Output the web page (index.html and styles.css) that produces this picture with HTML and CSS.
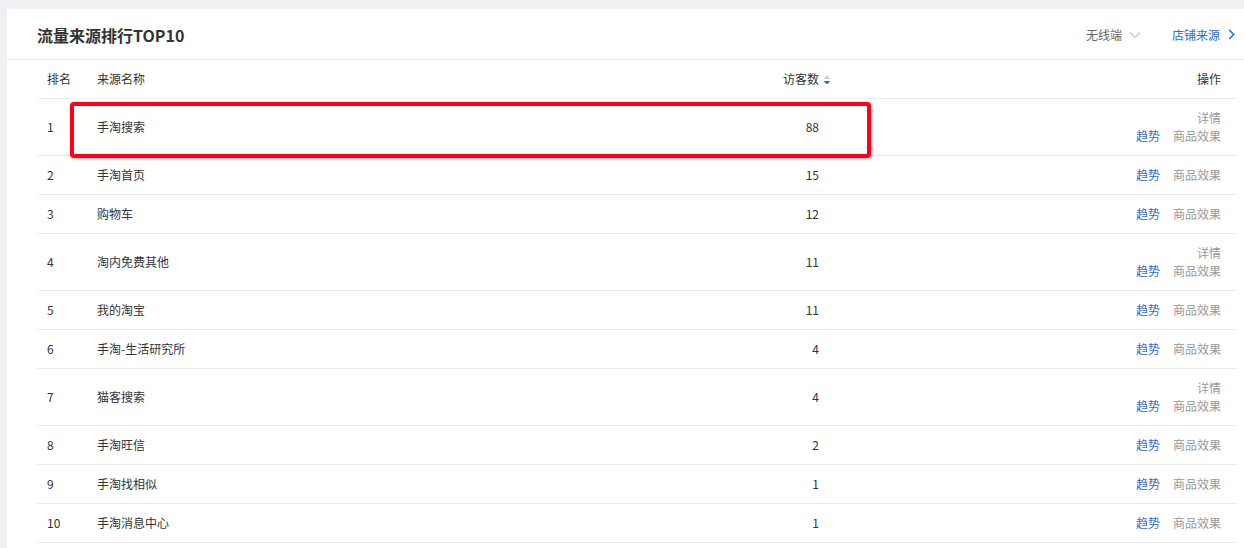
FILE: index.html
```html
<!DOCTYPE html>
<html lang="zh-CN">
<head>
<meta charset="utf-8">
<title>流量来源排行TOP10</title>
<link rel="stylesheet" href="styles.css">
</head>
<body>
<div class="page">
  <div class="card">
    <div class="card-head">
      <h2 class="title">流量来源排行TOP10</h2>
      <div class="head-tools">
        <span class="select">无线端
          <svg class="chev-down" width="12" height="8" viewBox="0 0 12 8"><path d="M1 1.5 L6 6.5 L11 1.5" fill="none" stroke="#c8c8c8" stroke-width="1.2"/></svg>
        </span>
        <a class="more">店铺来源
          <svg class="chev-right" width="7" height="11" viewBox="0 0 7 11"><path d="M1.2 1 L5.7 5.5 L1.2 10" fill="none" stroke="#2f6bd8" stroke-width="1.6"/></svg>
        </a>
      </div>
    </div>
    <div class="table-wrap">
      <table class="rank">
        <thead>
          <tr>
            <th class="c-rank">排名</th>
            <th class="c-name">来源名称</th>
            <th class="c-num">访客数<span class="sort"><svg width="8" height="10" viewBox="0 0 8 10"><path d="M4 0.5 L7.5 4 L0.5 4 Z" fill="#c4cbd6"/><path d="M0.5 6 L7.5 6 L4 9.5 Z" fill="#2f6bd8"/></svg></span></th>
            <th class="c-op">操作</th>
          </tr>
        </thead>
        <tbody>
          <tr><td class="c-rank">1</td><td class="c-name">手淘搜索</td><td class="c-num">88</td><td class="c-op"><div class="detail">详情</div><span class="trend">趋势</span><span class="effect">商品效果</span></td></tr>
          <tr><td class="c-rank">2</td><td class="c-name">手淘首页</td><td class="c-num">15</td><td class="c-op"><span class="trend">趋势</span><span class="effect">商品效果</span></td></tr>
          <tr><td class="c-rank">3</td><td class="c-name">购物车</td><td class="c-num">12</td><td class="c-op"><span class="trend">趋势</span><span class="effect">商品效果</span></td></tr>
          <tr><td class="c-rank">4</td><td class="c-name">淘内免费其他</td><td class="c-num">11</td><td class="c-op"><div class="detail">详情</div><span class="trend">趋势</span><span class="effect">商品效果</span></td></tr>
          <tr><td class="c-rank">5</td><td class="c-name">我的淘宝</td><td class="c-num">11</td><td class="c-op"><span class="trend">趋势</span><span class="effect">商品效果</span></td></tr>
          <tr><td class="c-rank">6</td><td class="c-name">手淘-生活研究所</td><td class="c-num">4</td><td class="c-op"><span class="trend">趋势</span><span class="effect">商品效果</span></td></tr>
          <tr><td class="c-rank">7</td><td class="c-name">猫客搜索</td><td class="c-num">4</td><td class="c-op"><div class="detail">详情</div><span class="trend">趋势</span><span class="effect">商品效果</span></td></tr>
          <tr><td class="c-rank">8</td><td class="c-name">手淘旺信</td><td class="c-num">2</td><td class="c-op"><span class="trend">趋势</span><span class="effect">商品效果</span></td></tr>
          <tr><td class="c-rank">9</td><td class="c-name">手淘找相似</td><td class="c-num">1</td><td class="c-op"><span class="trend">趋势</span><span class="effect">商品效果</span></td></tr>
          <tr><td class="c-rank">10</td><td class="c-name">手淘消息中心</td><td class="c-num">1</td><td class="c-op"><span class="trend">趋势</span><span class="effect">商品效果</span></td></tr>
        </tbody>
      </table>
      <div class="highlight"></div>
    </div>
  </div>
</div>
</body>
</html>
```

FILE: styles.css
```css
html, body {
  margin: 0;
  padding: 0;
  overflow: hidden;
}
body {
  background: #eef0f4;
  font-family: "Noto Sans CJK SC", "Liberation Sans", sans-serif;
  color: #333;
  font-size: 12px;
}
.page {
  padding: 9px 0 0 7px;
}
.card {
  background: #fff;
  height: 560px;
}
.card-head {
  height: 50px;
  border-bottom: 1px solid #e8e8e8;
  display: flex;
  align-items: center;
  justify-content: space-between;
  padding: 0 9px 0 30px;
}
.title {
  margin: 0;
  font-size: 16px;
  font-weight: bold;
  color: #333;
  line-height: 20px;
  padding-top: 1px;
}
.head-tools {
  display: flex;
  align-items: center;
  padding-top: 1px;
}
.select {
  color: #666;
  display: flex;
  align-items: center;
  gap: 7px;
  margin-right: 31px;
}
.more {
  color: #2f6bd8;
  display: flex;
  align-items: center;
  gap: 8px;
}
.table-wrap {
  position: relative;
  padding: 0 7px 0 30px;
}
.rank {
  width: 100%;
  border-collapse: collapse;
  table-layout: fixed;
}
.rank th, .rank td {
  padding: 10px 0;
  line-height: 18px;
  border-bottom: 1px solid #ececec;
  font-weight: normal;
  text-align: left;
  vertical-align: middle;
}
.rank th {
  color: #333;
}
.rank .c-rank { width: 50px; padding-left: 10px; }
.rank .c-name { width: 600px; }
.rank .c-num { width: 122px; text-align: right; }
.rank th.c-num { position: relative; }
.rank .c-op { text-align: right; padding-right: 16px; }
.sort {
  position: absolute;
  right: -12px;
  top: 15px;
  line-height: 0;
}
.detail {
  color: #999;
}
.trend {
  color: #2f6bd8;
  margin-right: 13px;
}
.effect {
  color: #999;
}
.highlight {
  position: absolute;
  left: 63px;
  top: 42px;
  width: 793px;
  height: 48px;
  border: 4px solid #ff0016;
  border-radius: 4px;
  box-shadow: 1px 1px 3px rgba(0,0,0,0.35);
  pointer-events: none;
}
```
